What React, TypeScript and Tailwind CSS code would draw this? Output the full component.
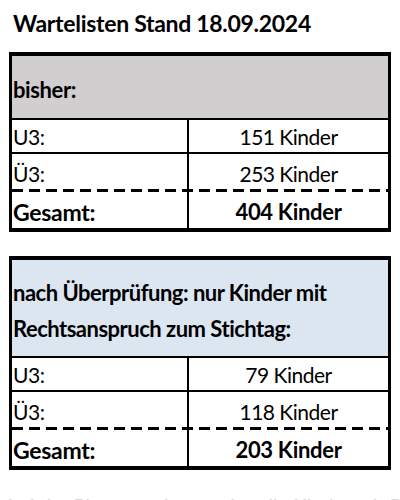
const rows1 = [
  { label: "U3:", value: "151 Kinder" },
  { label: "Ü3:", value: "253 Kinder" },
];
const rows2 = [
  { label: "U3:", value: "79 Kinder" },
  { label: "Ü3:", value: "118 Kinder" },
];

const Dashes = () => (
  <div className="h-[3px] bg-[repeating-linear-gradient(90deg,#000_0_11px,transparent_11px_17px)]" />
);

const Row = ({ label, value, dashed }: { label: string; value: string; dashed?: boolean }) => (
  <>
    <div className={dashed ? "flex h-[35px]" : "flex h-[34px] border-b-2 border-black"}>
      <div className="w-[177px] border-r-2 border-black flex items-end pl-[1px] text-[21px] leading-[30px] tracking-[-0.4px]">
        {label}
      </div>
      <div className="flex-1 flex items-end justify-center text-[21px] leading-[30px] tracking-[-0.5px]">{value}</div>
    </div>
    {dashed && <Dashes />}
  </>
);

const Total = ({ value }: { value: string }) => (
  <div className="flex h-[36px]">
    <div className="w-[177px] border-r-2 border-black flex items-end pl-[1px] text-[23px] leading-[32px] font-bold tracking-[-0.3px]">
      Gesamt:
    </div>
    <div className="flex-1 flex items-end justify-center text-[22px] leading-[32px] font-bold tracking-[-0.3px]">{value}</div>
  </div>
);

export default function App() {
  return (
    <div className="w-[400px] h-[500px] bg-white overflow-hidden text-black font-['Lato',sans-serif]">
      <h1 className="pt-[9px] pl-[13px] text-[23px] font-bold leading-[29px] tracking-[-0.3px]">
        Wartelisten Stand 18.09.2024
      </h1>

      <div className="mt-[14px] mx-[9px] border-[3px] border-t-4 border-b-4 border-black">
        <div className="h-[64px] bg-[#d0cecf] border-b-2 border-black flex items-center pl-[1px] pt-[4px] text-[22px] font-bold tracking-[-0.4px]">
          bisher:
        </div>
        {rows1.map((r, i) => (
          <Row key={r.label} label={r.label} value={r.value} dashed={i === rows1.length - 1} />
        ))}
        <Total value="404 Kinder" />
      </div>

      <div className="mt-[24px] mx-[9px] border-[3px] border-t-4 border-b-4 border-black">
        <div className="h-[98px] bg-[#dce6f1] border-b-2 border-black flex flex-col justify-center pl-[1px] pt-[6px] text-[22px] font-bold leading-[36px] tracking-[-0.5px]">
          <div>nach Überprüfung: nur Kinder mit</div>
          <div>Rechtsanspruch zum Stichtag:</div>
        </div>
        {rows2.map((r, i) => (
          <Row key={r.label} label={r.label} value={r.value} dashed={i === rows2.length - 1} />
        ))}
        <Total value="203 Kinder" />
      </div>

      <p className="mt-[21px] pl-[8px] text-[20px] leading-[28px] text-[#d6d6d6] whitespace-nowrap">
        bei der Platzvergabe werden die Kinder mit Rechtsanspruch
      </p>
    </div>
  );
}
